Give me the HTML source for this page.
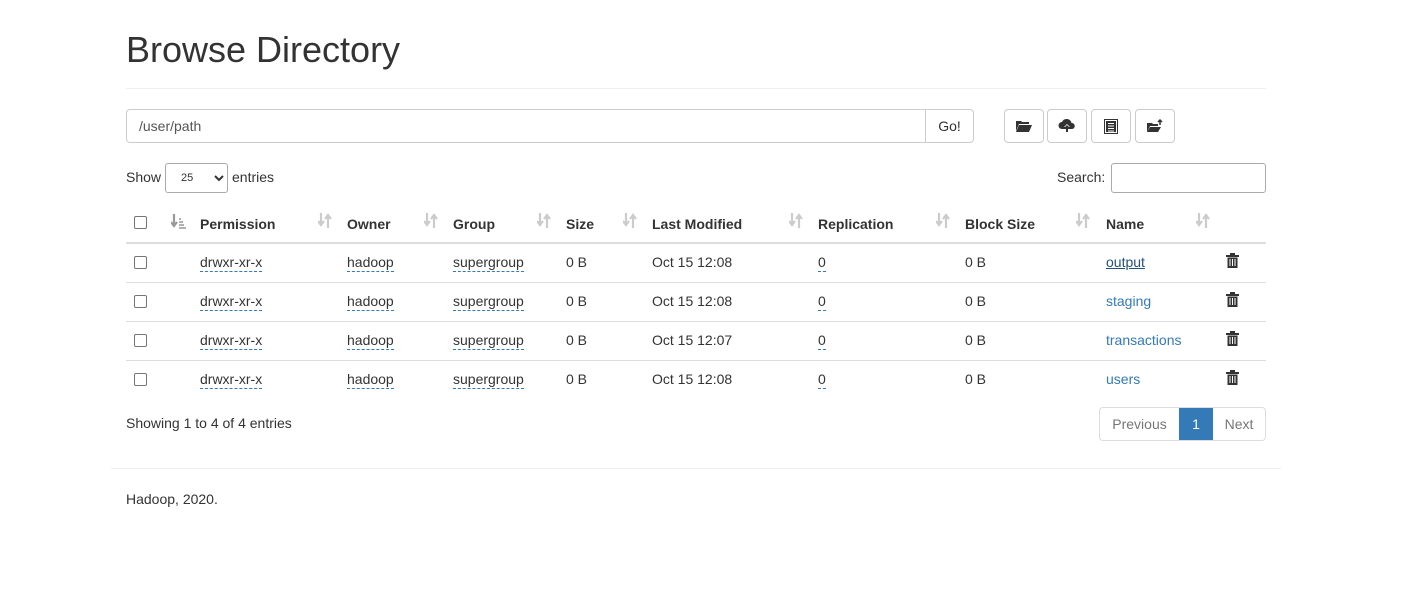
<!DOCTYPE html>
<html><head><meta charset="utf-8"><style>
*{box-sizing:border-box;margin:0;padding:0}
body{width:1419px;height:609px;background:#fff;font-family:"Liberation Sans",Arial,sans-serif;font-size:14px;color:#333;position:relative;overflow:hidden}
.a{position:absolute;white-space:nowrap}
h1{position:absolute;left:126px;top:28px;font-size:36px;font-weight:500;color:#333;line-height:44px}
.hr{position:absolute;height:1px;background:#eee}
.inp{position:absolute;left:126px;top:109px;width:800px;height:34px;border:1px solid #ccc;border-radius:4px 0 0 4px;padding:8px 12px;color:#555;line-height:16px}
.go{position:absolute;left:925px;top:109px;width:49px;height:34px;border:1px solid #ccc;border-radius:0 4px 4px 0;text-align:center;line-height:32px}
.btn{position:absolute;top:109px;width:40px;height:34px;border:1px solid #ccc;border-radius:4px;display:flex;align-items:center;justify-content:center}
.cb{position:absolute;width:13px;height:13px;border:1px solid #767676;border-radius:2px;background:#fff}
.th{font-weight:bold}
.si{position:absolute}
.dl{border-bottom:1px dashed #337ab7;padding-bottom:1px}
.rl{position:absolute;left:126px;width:1140px;height:1px;background:#ddd}
.lk{color:#337ab7}
</style></head><body>
<svg width="0" height="0" style="position:absolute"><defs><symbol id="s" viewBox="0 0 14 15"><path d="M3 0v11M0 8l3 4 3-4M10 15V4M7 6l3-4 3 4" stroke="#ccc" stroke-width="2.2" fill="none"/></symbol></defs></svg>
<h1>Browse Directory</h1>
<div class="hr" style="left:126px;top:88px;width:1140px"></div>
<div class="inp">/user/path</div>
<div class="go">Go!</div>
<div class="btn" style="left:1004px"><svg width="18" height="14" viewBox="0 0 18 14"><path d="M1 2h5l1 1h7v2H4L1 12z" fill="#333"/><path d="M4 6h13l-3 7H1z" fill="#333"/></svg></div>
<div class="btn" style="left:1047px"><svg width="18" height="16" viewBox="0 0 18 16"><path d="M4 11a3.5 3.5 0 0 1 0-7 5 5 0 0 1 9.5 1A3 3 0 0 1 14 11z" fill="#333"/><path d="M9 6l-3 3h2v5h2V9h2z" fill="#fff"/><path d="M9 7l-2.5 2.5h1.5v4.5h2V9.5h1.5z" fill="#333"/></svg></div>
<div class="btn" style="left:1091px"><svg width="14" height="15" viewBox="0 0 14 15"><rect x="0.5" y="0.5" width="13" height="14" fill="#fff" stroke="#333"/><rect x="2" y="2" width="10" height="11" fill="#333"/><path d="M4 4.5h6M4 7h6M4 9.5h6M4 12h6" stroke="#fff" stroke-width="1"/></svg></div>
<div class="btn" style="left:1135px"><svg width="18" height="14" viewBox="0 0 18 14"><path d="M1 4h5l1 1h5v2H4L1 13z" fill="#333"/><path d="M4 8h11l-3 5H1z" fill="#333"/><path d="M14 1v5M12 3l2-2 2 2" stroke="#333" stroke-width="1.5" fill="none"/></svg></div>

<div class="a" style="left:126px;top:169px">Show</div>
<div class="a" style="left:165px;top:163px;width:63px;height:30px;border:1px solid #aaa;border-radius:3px;font-size:11px;padding:8px 0 0 15px">25<svg style="position:absolute;left:48px;top:11px" width="10" height="7" viewBox="0 0 10 7"><path d="M1 1l4 4 4-4" stroke="#333" stroke-width="2" fill="none"/></svg></div>
<div class="a" style="left:232px;top:169px">entries</div>
<div class="a" style="left:1057px;top:169px">Search:</div>
<div class="a" style="left:1111px;top:163px;width:155px;height:30px;border:1px solid #aaa;border-radius:3px"></div>

<div class="cb" style="left:134px;top:216px"></div>
<svg class="si" style="left:171px;top:214px" width="15" height="15" viewBox="0 0 15 15"><path d="M3 0v11M0 8l3 4 3-4" stroke="#999" stroke-width="2.2" fill="none"/><path d="M8 5h2M8 8h4M8 11h5M8 14h7" stroke="#999" stroke-width="1.6"/></svg>
<div class="a th" style="left:200px;top:216px">Permission</div><svg class="si" style="left:318px;top:213px" width="14" height="15"><use href="#s"/></svg>
<div class="a th" style="left:347px;top:216px">Owner</div><svg class="si" style="left:424px;top:213px" width="14" height="15"><use href="#s"/></svg>
<div class="a th" style="left:453px;top:216px">Group</div><svg class="si" style="left:537px;top:213px" width="14" height="15"><use href="#s"/></svg>
<div class="a th" style="left:566px;top:216px">Size</div><svg class="si" style="left:623px;top:213px" width="14" height="15"><use href="#s"/></svg>
<div class="a th" style="left:652px;top:216px">Last Modified</div><svg class="si" style="left:789px;top:213px" width="14" height="15"><use href="#s"/></svg>
<div class="a th" style="left:818px;top:216px">Replication</div><svg class="si" style="left:936px;top:213px" width="14" height="15"><use href="#s"/></svg>
<div class="a th" style="left:965px;top:216px">Block Size</div><svg class="si" style="left:1076px;top:213px" width="14" height="15"><use href="#s"/></svg>
<div class="a th" style="left:1106px;top:216px">Name</div><svg class="si" style="left:1196px;top:213px" width="14" height="15"><use href="#s"/></svg>
<div class="rl" style="top:242px;height:2px"></div>

<div class="cb" style="left:134px;top:256px"></div><div class="a" style="left:200px;top:254px"><span class="dl">drwxr-xr-x</span></div><div class="a" style="left:347px;top:254px"><span class="dl">hadoop</span></div><div class="a" style="left:453px;top:254px"><span class="dl">supergroup</span></div><div class="a" style="left:566px;top:254px">0 B</div><div class="a" style="left:652px;top:254px">Oct 15 12:08</div><div class="a" style="left:818px;top:254px"><span class="dl">0</span></div><div class="a" style="left:965px;top:254px">0 B</div><div class="a" style="left:1106px;top:254px;color:#23527c;text-decoration:underline">output</div>
<div class="rl" style="top:282px"></div>
<div class="cb" style="left:134px;top:295px"></div><div class="a" style="left:200px;top:293px"><span class="dl">drwxr-xr-x</span></div><div class="a" style="left:347px;top:293px"><span class="dl">hadoop</span></div><div class="a" style="left:453px;top:293px"><span class="dl">supergroup</span></div><div class="a" style="left:566px;top:293px">0 B</div><div class="a" style="left:652px;top:293px">Oct 15 12:08</div><div class="a" style="left:818px;top:293px"><span class="dl">0</span></div><div class="a" style="left:965px;top:293px">0 B</div><div class="a lk" style="left:1106px;top:293px">staging</div>
<div class="rl" style="top:321px"></div>
<div class="cb" style="left:134px;top:334px"></div><div class="a" style="left:200px;top:332px"><span class="dl">drwxr-xr-x</span></div><div class="a" style="left:347px;top:332px"><span class="dl">hadoop</span></div><div class="a" style="left:453px;top:332px"><span class="dl">supergroup</span></div><div class="a" style="left:566px;top:332px">0 B</div><div class="a" style="left:652px;top:332px">Oct 15 12:07</div><div class="a" style="left:818px;top:332px"><span class="dl">0</span></div><div class="a" style="left:965px;top:332px">0 B</div><div class="a lk" style="left:1106px;top:332px">transactions</div>
<div class="rl" style="top:360px"></div>
<div class="cb" style="left:134px;top:373px"></div><div class="a" style="left:200px;top:371px"><span class="dl">drwxr-xr-x</span></div><div class="a" style="left:347px;top:371px"><span class="dl">hadoop</span></div><div class="a" style="left:453px;top:371px"><span class="dl">supergroup</span></div><div class="a" style="left:566px;top:371px">0 B</div><div class="a" style="left:652px;top:371px">Oct 15 12:08</div><div class="a" style="left:818px;top:371px"><span class="dl">0</span></div><div class="a" style="left:965px;top:371px">0 B</div><div class="a lk" style="left:1106px;top:371px">users</div>

<svg class="a" style="left:1226px;top:253px" width="13" height="15" viewBox="0 0 13 15"><path d="M0 2h13v2H0zM4 0h5v2H4z" fill="#333"/><path d="M1.5 4.5h10V15h-10z" fill="#333"/><path d="M4 6v7M6.5 6v7M9 6v7" stroke="#fff"/></svg>
<svg class="a" style="left:1226px;top:292px" width="13" height="15" viewBox="0 0 13 15"><path d="M0 2h13v2H0zM4 0h5v2H4z" fill="#333"/><path d="M1.5 4.5h10V15h-10z" fill="#333"/><path d="M4 6v7M6.5 6v7M9 6v7" stroke="#fff"/></svg>
<svg class="a" style="left:1226px;top:331px" width="13" height="15" viewBox="0 0 13 15"><path d="M0 2h13v2H0zM4 0h5v2H4z" fill="#333"/><path d="M1.5 4.5h10V15h-10z" fill="#333"/><path d="M4 6v7M6.5 6v7M9 6v7" stroke="#fff"/></svg>
<svg class="a" style="left:1226px;top:370px" width="13" height="15" viewBox="0 0 13 15"><path d="M0 2h13v2H0zM4 0h5v2H4z" fill="#333"/><path d="M1.5 4.5h10V15h-10z" fill="#333"/><path d="M4 6v7M6.5 6v7M9 6v7" stroke="#fff"/></svg>

<div class="a" style="left:126px;top:415px">Showing 1 to 4 of 4 entries</div>
<div class="a" style="left:1099px;top:407px;width:167px;height:34px;border:1px solid #ddd;border-radius:4px;overflow:hidden;display:flex">
<div style="width:79px;line-height:32px;text-align:center;color:#777">Previous</div>
<div style="width:34px;line-height:32px;text-align:center;color:#fff;background:#337ab7">1</div>
<div style="flex:1;line-height:32px;text-align:center;color:#777">Next</div></div>

<div class="hr" style="left:111px;top:468px;width:1170px"></div>
<div class="a" style="left:126px;top:491px">Hadoop, 2020.</div>
</body></html>
